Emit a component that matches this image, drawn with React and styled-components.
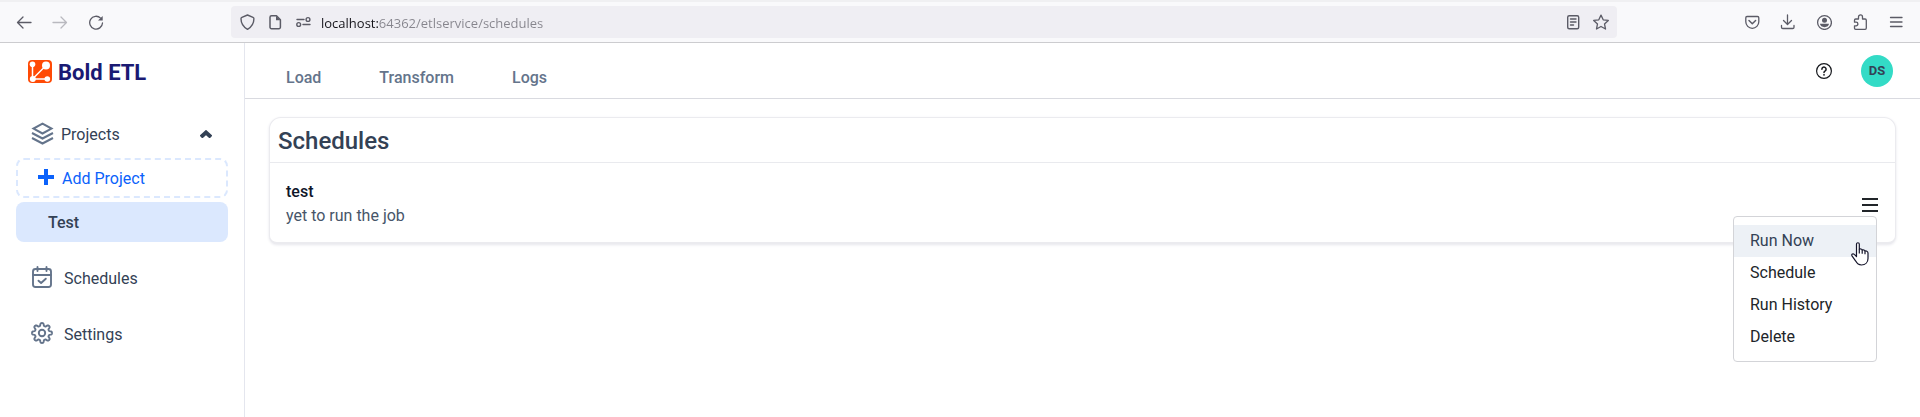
import React from "react";
import styled, { createGlobalStyle, css } from "styled-components";

const GlobalStyle = createGlobalStyle`
  *, *::before, *::after { box-sizing: border-box; }
  body {
    margin: 0;
    background: #fff;
    color: #334155;
    font-family: Roboto, "Liberation Sans", sans-serif;
    font-size: 16px;
    line-height: 24px;
  }
  button, input { font: inherit; color: inherit; }
  button { padding: 0; border: 0; background: none; cursor: pointer; }
  a { color: inherit; text-decoration: none; }
  h1, h2, p, ul { margin: 0; padding: 0; }
  ul { list-style: none; }
  svg { display: block; flex: none; }
`;

const Page = styled.div`
  display: flex;
  flex-direction: column;
  min-height: 100vh;
`;

/* Browser toolbar */

const BrowserBar = styled.div`
  display: grid;
  grid-template-columns: 231px minmax(0, 1fr) 303px;
  align-items: center;
  height: 43px;
  border-top: 2px solid #f0f0f2;
  border-bottom: 1px solid #cccccf;
  background: #f9f9fb;
  color: #5b5b66;
`;

const ToolGroup = styled.div`
  display: flex;
  gap: 20px;
  padding: 0 16px;
  justify-content: ${(p) => (p.$end ? "flex-end" : "flex-start")};
`;

const ToolButton = styled.button`
  width: 16px;
  height: 16px;
  opacity: ${(p) => (p.disabled ? 0.4 : 1)};
`;

const AddressBar = styled.div`
  display: flex;
  align-items: center;
  gap: 12px;
  height: 32px;
  padding: 0 8px;
  border-radius: 4px;
  background: #efeef3;
`;

const AddressInput = styled.input`
  flex: 1;
  min-width: 0;
  height: 24px;
  margin-left: -2px;
  padding: 2px 0 0;
  border: 0;
  outline: 0;
  font-family: "Open Sans", "Noto Sans", sans-serif;
  font-size: 13px;
  color: #86858d;
  background: linear-gradient(to right, #15141a 57px, #86858d 57px);
  background-clip: text;
  -webkit-text-fill-color: transparent;
`;

/* Application frame */

const Shell = styled.div`
  display: grid;
  grid-template-columns: 245px minmax(0, 1fr);
  flex: 1;
`;

const Sidebar = styled.aside`
  padding: 16px;
  border-right: 1px solid #e4e6ee;
`;

const Brand = styled.a`
  display: flex;
  align-items: center;
  gap: 6px;
  height: 28px;
  padding-left: 12px;
  color: #1a1a73;
  font-size: 22px;
  font-weight: 700;
  svg { margin-bottom: 2px; }
`;

const SideNav = styled.nav`
  display: flex;
  flex-direction: column;
  margin-top: 27px;
`;

const sideRow = css`
  display: flex;
  align-items: center;
  width: 100%;
  height: 40px;
  text-align: left;
  svg { margin-bottom: 4px; }
`;

const ProjectsToggle = styled.button`
  ${sideRow}
  gap: 7px;
  margin-bottom: 4px;
  padding: 2px 16px 0 15px;
  > svg { margin: 0 0 2px auto; }
`;

const AddProject = styled.button`
  ${sideRow}
  gap: 8px;
  padding: 2px 20px 0;
  border: 2px dashed #dbe8fe;
  border-radius: 8px;
  color: #0b62fb;
`;

const ProjectLink = styled.a`
  ${sideRow}
  margin-top: 4px;
  padding: 2px 32px 0;
  border-radius: 8px;
  background: #dbe8fe;
  font-weight: 500;
`;

const SideLink = styled.a`
  ${sideRow}
  gap: 11px;
  margin-top: 16px;
  padding: 2px 15px 0;
`;

const TopBar = styled.header`
  display: flex;
  align-items: center;
  justify-content: space-between;
  height: 56px;
  padding: 0 27px 0 41px;
  border-bottom: 1px solid #d9dae0;
`;

const Tabs = styled.nav`
  display: flex;
  gap: 58px;
  padding-top: 14px;
  color: #64748b;
  font-weight: 500;
`;

const Account = styled.div`
  display: flex;
  align-items: center;
  gap: 29px;
  color: #16181d;
`;

const Avatar = styled.button`
  width: 32px;
  height: 32px;
  border-radius: 50%;
  background: #33dbc6;
  color: #334155;
  font-size: 13px;
  font-weight: 700;
`;

/* Schedules card */

const Card = styled.section`
  margin: 18px 24px;
  border: 1px solid #ebebef;
  border-bottom-width: 2px;
  border-radius: 12px 12px 8px 8px;
  background: #fff;
  box-shadow: 0 1px 3px #e6e6ec;
`;

const CardTitle = styled.h1`
  padding: 7px 8px 5px;
  border-bottom: 1px solid #e9eaee;
  font-size: 24px;
  font-weight: 500;
  line-height: 32px;
`;

const ScheduleRow = styled.article`
  display: flex;
  align-items: center;
  justify-content: space-between;
  padding: 17px 16px 14px;
`;

const ScheduleName = styled.h2`
  color: #0f172a;
  font-size: 16px;
  font-weight: 500;
`;

const ScheduleStatus = styled.p`
  color: #475569;
`;

const Actions = styled.div`
  position: relative;
  padding-top: 2px;
  color: #212529;
`;

const MenuButton = styled.button`
  display: block;
  width: 18px;
  height: 16px;
`;

const Menu = styled.ul`
  position: absolute;
  top: 21px;
  right: 2px;
  width: 144px;
  padding: 8px 0;
  border: 1px solid #d3d4d8;
  border-radius: 4px;
  background: #fff;
`;

const MenuItem = styled.button`
  display: block;
  width: 100%;
  height: 32px;
  padding: 0 16px;
  text-align: left;
  color: ${(p) => (p.$hovered ? "#334155" : "#212529")};
  background: ${(p) => (p.$hovered ? "#edf1f6" : "transparent")};
`;

const Pointer = styled.svg`
  position: absolute;
  top: 25px;
  right: 7px;
  pointer-events: none;
`;

/* Icons */

const Icon = ({ size = 16, width, height, stroke = 1.3, children }) => (
  <svg
    width={width || size}
    height={height || size}
    viewBox={`0 0 ${width || size} ${height || size}`}
    fill="none"
    stroke="currentColor"
    strokeWidth={stroke}
    strokeLinecap="round"
    strokeLinejoin="round"
    aria-hidden="true"
  >
    {children}
  </svg>
);

const BackIcon = () => <Icon><path d="M15 8.5H1.6M7 3 1.5 8.5 7 14" /></Icon>;
const ForwardIcon = () => <Icon><path d="M1 8.5h13.4M9 3l5.5 5.5L9 14" /></Icon>;
const ReloadIcon = () => (
  <Icon>
    <path d="M14.5 9a6.4 6.4 0 1 1-1.9-4.9" />
    <path d="M14.7 2v4.6H10Z" fill="currentColor" stroke="none" />
  </Icon>
);
const ShieldIcon = () => (
  <Icon stroke={1.4}><path d="M8.5 1 14 3.3q.9.4.9 1.4c0 4.8-2.3 8.2-6.4 10.6C4.4 12.9 2 9.5 2 4.7q0-1 .9-1.4Z" /></Icon>
);
const PageIcon = () => (
  <Icon stroke={1.5}>
    <path d="M9.5 1.8H4.5a1.5 1.5 0 0 0-1.5 1.5v9.9a1.5 1.5 0 0 0 1.5 1.5h7.4a1.5 1.5 0 0 0 1.5-1.5V5.7Z" />
    <path d="M9 1.8V6.2h4.4Z" fill="currentColor" stroke="none" />
  </Icon>
);
const PermissionsIcon = () => (
  <Icon stroke={1.4}>
    <path d="M2 5.5h7M8 10.5h7" />
    <circle cx="13" cy="5.5" r="1.9" />
    <circle cx="3.7" cy="10.5" r="1.9" />
  </Icon>
);
const ReaderIcon = () => (
  <Icon stroke={1.4}>
    <rect x="2.7" y="1.7" width="11" height="13" rx="1.5" />
    <path d="M5.5 5h5.5M5.5 8h5.5M5.5 11h3" />
  </Icon>
);
const StarIcon = () => (
  <Icon><path d="m8 1.1 2.2 4.7 5.1.6-3.8 3.5 1 5.1L8 12.5 3.5 15l1-5.1L.7 6.4l5.1-.6Z" /></Icon>
);
const PocketIcon = () => (
  <Icon>
    <path d="M3 2.5h10.5c.8 0 1.3.5 1.3 1.3v4a6.5 6.5 0 0 1-13 0v-4c0-.8.4-1.3 1.2-1.3Z" />
    <path d="m5 6.5 3.3 3.2 3.3-3.2" strokeWidth="1.5" />
  </Icon>
);
const DownloadIcon = () => (
  <Icon><path d="M7.5 1v9.2M3.5 6.5l4 4 4-4M1.500 11.5v1.7c0 .8.5 1.3 1.3 1.3h9.9c.8 0 1.3-.5 1.3-1.3v-1.7" /></Icon>
);
const ProfileIcon = () => (
  <Icon>
    <circle cx="8.5" cy="8.5" r="6.9" />
    <circle cx="8.5" cy="6.2" r="2.5" fill="currentColor" stroke="none" />
    <path d="M4 9.8h9c0 1.8-2 3.4-4.5 3.4S4 11.6 4 9.8Z" fill="currentColor" stroke="none" />
  </Icon>
);
const ExtensionIcon = () => (
  <Icon>
    <path d="M6.500 5V2.900a2 2 0 0 1 4 0V5h2.600q1.200 0 1.200 1.200v7.900q0 1.200-1.200 1.200H3.700q-1.200 0-1.200-1.200v-2.300h1.600a1.700 1.700 0 0 0 0-3.600H2.500V6.200Q2.500 5 3.700 5Z" />
  </Icon>
);
const AppMenuIcon = () => <Icon><path d="M2.5 3.5h11.5M2.5 8h11.5M2.5 12.5h11.5" /></Icon>;

const BrandIcon = () => (
  <svg width="24" height="24" viewBox="0 0 24 24" aria-hidden="true">
    <rect width="24" height="23" rx="4" fill="#ff4a05" />
    <path d="M4.5 4.5v14.5M4.5 19h15M4.5 19 18 5.5" stroke="#fff" strokeWidth="1.5" />
    <g fill="#fff">
      <circle cx="4.5" cy="4.2" r="2.8" />
      <circle cx="18" cy="5.5" r="4" />
      <circle cx="4.8" cy="19" r="3" />
      <circle cx="19.3" cy="19" r="2.8" />
    </g>
  </svg>
);

const Muted = styled.span`
  display: flex;
  color: #64748b;
`;

const LayersIcon = () => (
  <Muted>
    <Icon size={23} stroke={2}>
      <g strokeLinejoin="miter" strokeLinecap="butt">
        <path d="m11.500 1.700 9 4.900-9 4.900-9-4.900Z" />
        <path d="m1 11 10.500 5.500L22 11M1 16l10.500 5.500L22 16" />
      </g>
    </Icon>
  </Muted>
);
const ChevronUpIcon = () => (
  <Icon width={12} height={8} stroke={4}>
    <path d="M1 7 6 2.500l5 4.500" strokeLinecap="butt" strokeLinejoin="miter" />
  </Icon>
);
const PlusIcon = () => (
  <Icon stroke={4}><path d="M8 0v16M0 8h16" strokeLinecap="butt" /></Icon>
);
const CalendarIcon = () => (
  <Muted>
    <Icon size={22} stroke={1.9}>
      <rect x="2" y="3" width="18" height="18" rx="2.5" />
      <path d="M2 9h18M6.5 1v4M15.5 1v4M7.5 14.7l2.6 2.3 4.7-4.3" />
    </Icon>
  </Muted>
);

const gearPath = (() => {
  const points = [];
  for (let i = 0; i < 160; i += 1) {
    const angle = (i / 160) * Math.PI * 2;
    const radius = 8.6 + 1.4 * Math.tanh(2 * Math.cos(8 * angle));
    points.push(`${(11 + radius * Math.sin(angle)).toFixed(2)} ${(11 - radius * Math.cos(angle)).toFixed(2)}`);
  }
  return `M${points.join("L")}Z`;
})();

const GearIcon = () => (
  <Muted>
    <Icon size={22} stroke={1.9}>
      <path d={gearPath} />
      <circle cx="11" cy="11" r="3.2" />
    </Icon>
  </Muted>
);
const HelpIcon = () => (
  <Icon size={16} stroke={1.2}>
    <circle cx="8" cy="8" r="7.4" />
    <path d="M5.9 6.2a2.1 2.1 0 1 1 3.3 1.7c-.8.5-1.2.9-1.2 1.7" strokeWidth="1.5" />
    <circle cx="8" cy="11.8" r=".9" fill="currentColor" stroke="none" />
  </Icon>
);
const RowMenuIcon = () => (
  <Icon width={18} height={16} stroke={2}>
    <path d="M1 2h16M1 8h16M1 14h16" strokeLinecap="butt" />
  </Icon>
);
const HandPointer = () => (
  <Pointer width="18" height="24" viewBox="0 0 18 24" aria-hidden="true">
    <path
      d="M5.5 14.5V2.3C5.5.2 8.3.2 8.3 2.3v5.2c.6-.9 2.7-.7 2.9.7.9-.6 2.6-.3 2.8 1 .9-.6 3 0 3 1.7v5.6c0 3.8-2.7 6.5-6.5 6.5-2.9 0-4.6-1.5-5.8-3.9L1 13.8c-.8-1.7 1-2.7 2.3-1.4l2.2 2.1Z"
      fill="#fff" stroke="#15152b" strokeWidth="1.2" strokeLinejoin="round"
    />
    <path d="M8.3 7.5v4M11.2 8.2v3.6M14 9.3v3" fill="none" stroke="#15152b" strokeWidth="1.2" />
  </Pointer>
);

const browserTools = [
  ["Save to Pocket", PocketIcon],
  ["Downloads", DownloadIcon],
  ["Account", ProfileIcon],
  ["Extensions", ExtensionIcon],
  ["Open application menu", AppMenuIcon],
];

const menuItems = ["Run Now", "Schedule", "Run History", "Delete"];

export default function App() {
  return (
    <Page>
      <GlobalStyle />
      <BrowserBar>
        <ToolGroup>
          <ToolButton aria-label="Back"><BackIcon /></ToolButton>
          <ToolButton aria-label="Forward" disabled><ForwardIcon /></ToolButton>
          <ToolButton aria-label="Reload"><ReloadIcon /></ToolButton>
        </ToolGroup>
        <AddressBar>
          <ToolButton aria-label="Tracking protection"><ShieldIcon /></ToolButton>
          <ToolButton aria-label="Site information"><PageIcon /></ToolButton>
          <ToolButton aria-label="Permissions"><PermissionsIcon /></ToolButton>
          <AddressInput aria-label="Address" defaultValue="localhost:64362/etlservice/schedules" />
          <ToolButton aria-label="Reader view"><ReaderIcon /></ToolButton>
          <ToolButton aria-label="Bookmark"><StarIcon /></ToolButton>
        </AddressBar>
        <ToolGroup $end>
          {browserTools.map(([label, Glyph]) => (
            <ToolButton key={label} aria-label={label}><Glyph /></ToolButton>
          ))}
        </ToolGroup>
      </BrowserBar>

      <Shell>
        <Sidebar>
          <Brand href="#home"><BrandIcon />Bold ETL</Brand>
          <SideNav aria-label="Main">
            <ProjectsToggle aria-expanded="true">
              <LayersIcon />Projects<ChevronUpIcon />
            </ProjectsToggle>
            <AddProject><PlusIcon />Add Project</AddProject>
            <ProjectLink href="#test">Test</ProjectLink>
            <SideLink href="#schedules"><CalendarIcon />Schedules</SideLink>
            <SideLink href="#settings"><GearIcon />Settings</SideLink>
          </SideNav>
        </Sidebar>

        <div>
          <TopBar>
            <Tabs aria-label="Sections">
              <a href="#load">Load</a>
              <a href="#transform">Transform</a>
              <a href="#logs">Logs</a>
            </Tabs>
            <Account>
              <ToolButton aria-label="Help"><HelpIcon /></ToolButton>
              <Avatar>DS</Avatar>
            </Account>
          </TopBar>
          <main>
            <Card>
              <CardTitle>Schedules</CardTitle>
              <ScheduleRow>
                <div>
                  <ScheduleName>test</ScheduleName>
                  <ScheduleStatus>yet to run the job</ScheduleStatus>
                </div>
                <Actions>
                  <MenuButton aria-label="Schedule actions" aria-expanded="true"><RowMenuIcon /></MenuButton>
                  <Menu>
                    {menuItems.map((label, index) => (
                      <li key={label}><MenuItem $hovered={index === 0}>{label}</MenuItem></li>
                    ))}
                    <HandPointer />
                  </Menu>
                </Actions>
              </ScheduleRow>
            </Card>
          </main>
        </div>
      </Shell>
    </Page>
  );
}
